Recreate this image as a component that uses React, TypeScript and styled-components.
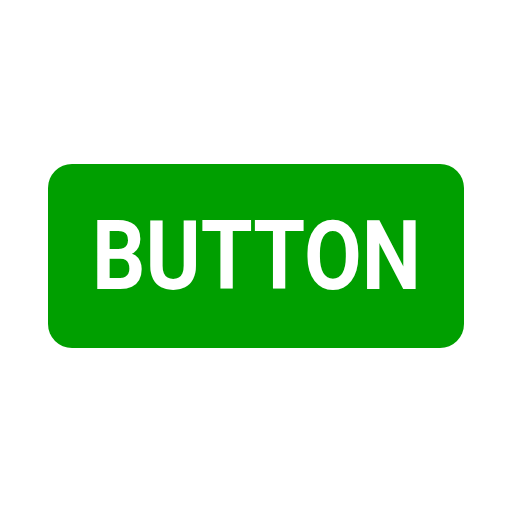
import React from "react";
import styled, { createGlobalStyle } from "styled-components";

const GlobalStyle = createGlobalStyle`
  html, body {
    margin: 0;
    padding: 0;
    background: #ffffff;
  }
`;

const Page = styled.div`
  width: 512px;
  height: 512px;
  display: flex;
  align-items: center;
  justify-content: center;
`;

const Button = styled.button`
  width: 416px;
  height: 184px;
  border: none;
  border-radius: 24px;
  background: #009f00;
  color: #ffffff;
  padding: 0;
  display: flex;
  align-items: center;
  justify-content: center;
  cursor: pointer;
`;

/* Condensed label: Roboto Bold narrowed horizontally */
const Label = styled.span`
  display: inline-block;
  font-family: Roboto, "Liberation Sans", sans-serif;
  font-weight: 700;
  font-size: 96px;
  line-height: 1;
  transform: scaleX(0.873);
  transform-origin: center;
`;

export default function App() {
  return (
    <>
      <GlobalStyle />
      <Page>
        <Button>
          <Label>BUTTON</Label>
        </Button>
      </Page>
    </>
  );
}
